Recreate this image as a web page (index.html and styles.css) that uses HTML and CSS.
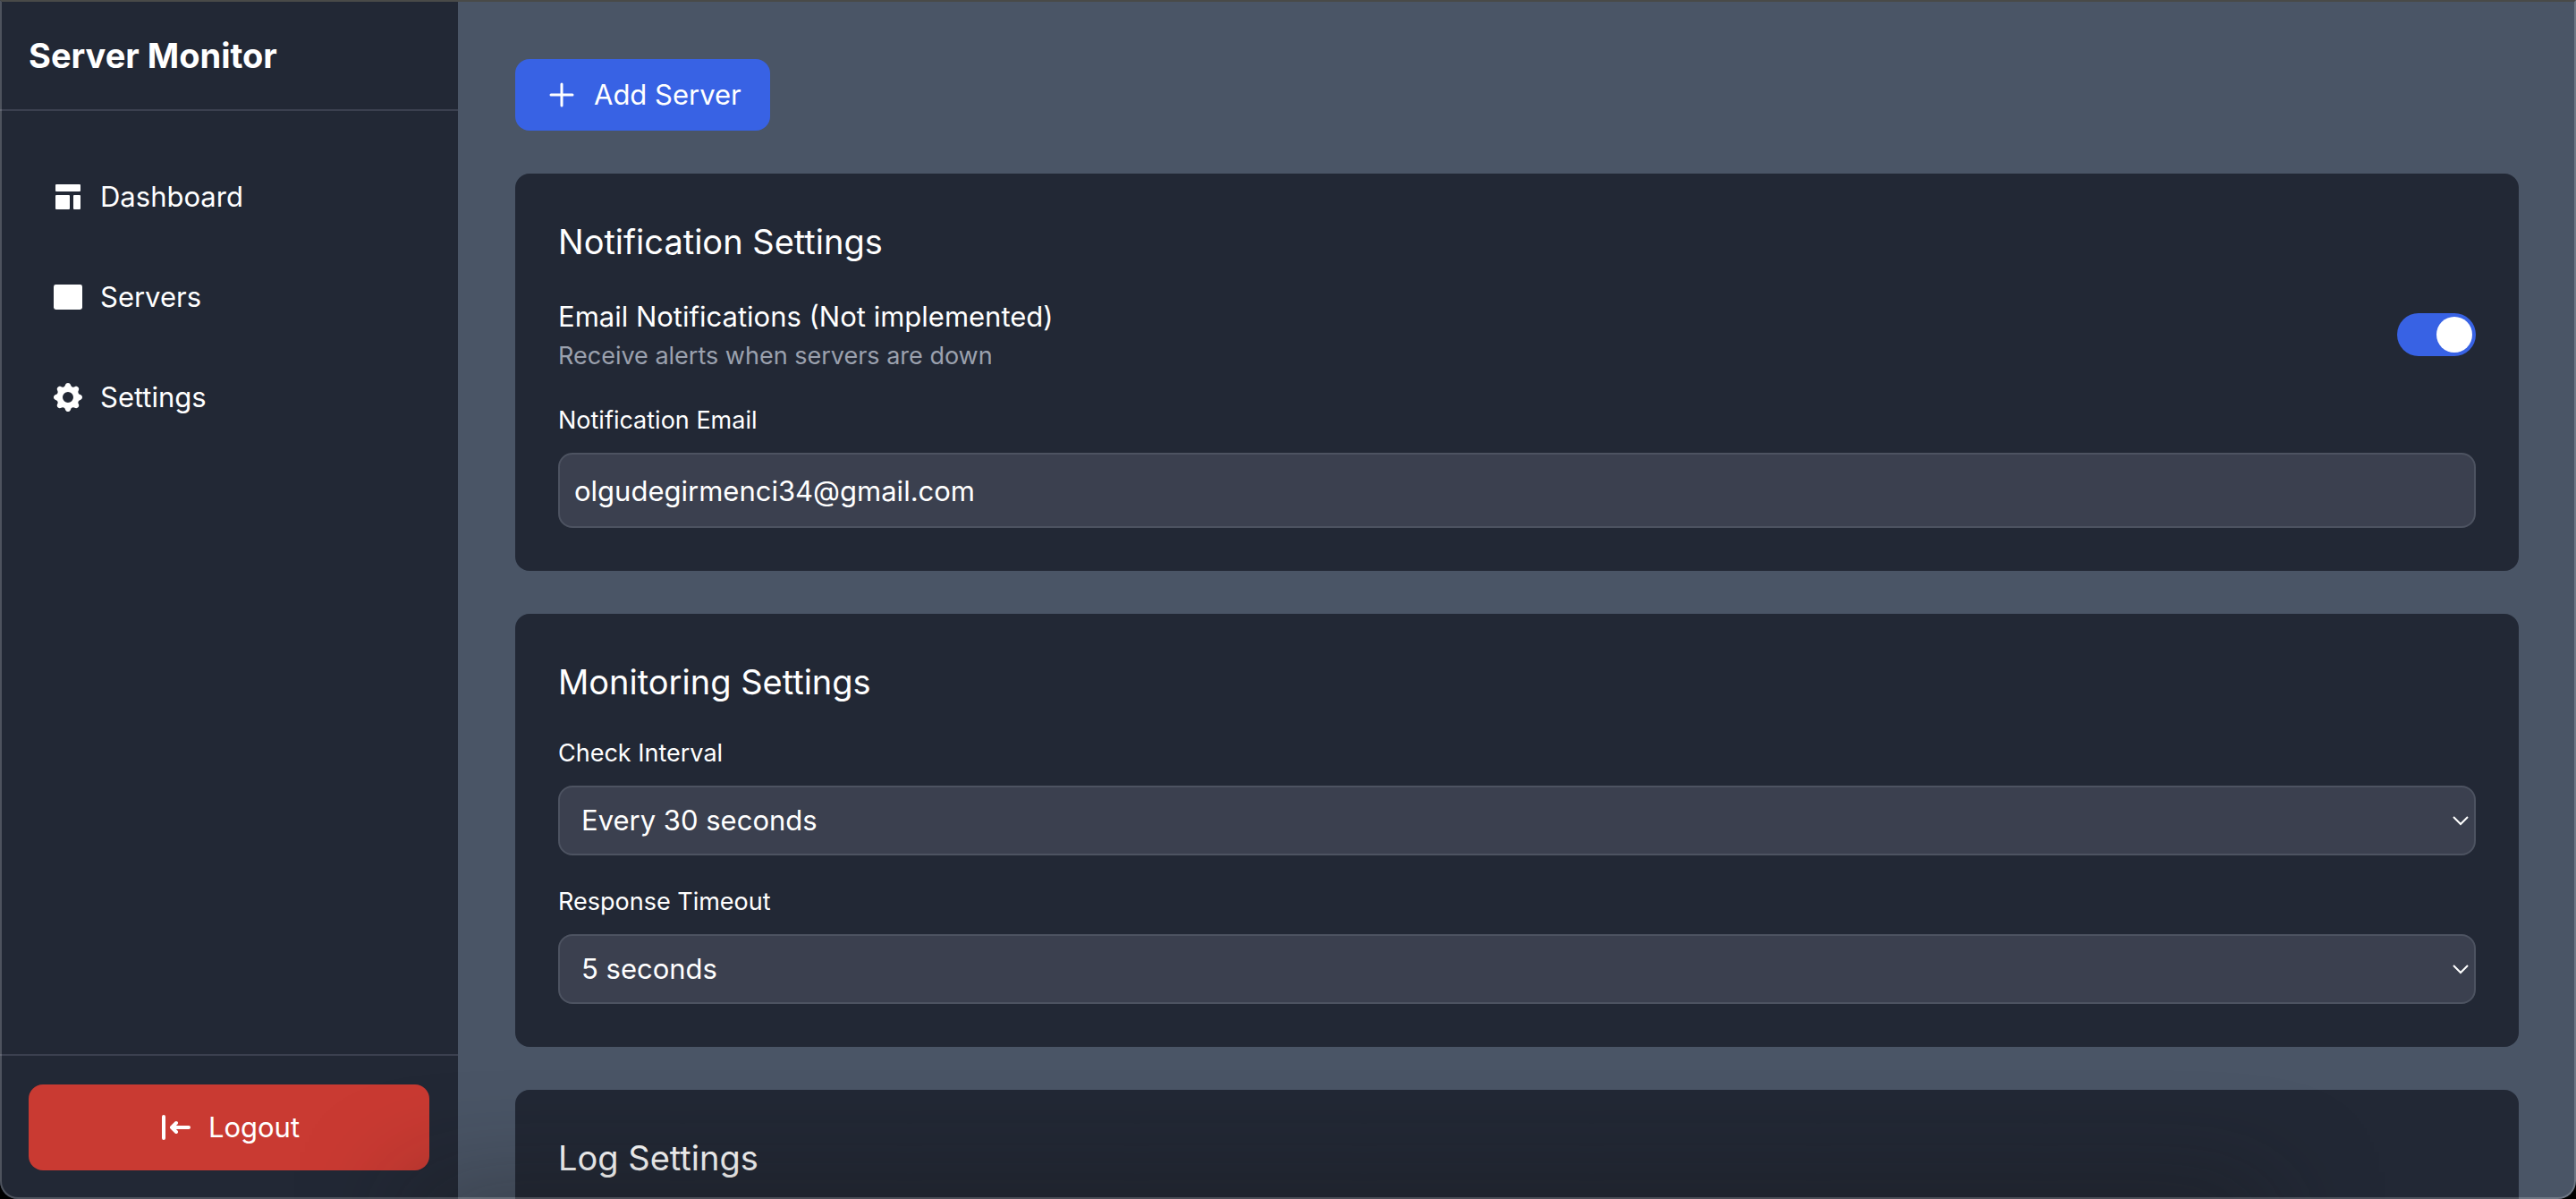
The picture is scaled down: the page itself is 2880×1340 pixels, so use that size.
FILE: index.html
```html
<!DOCTYPE html>
<html lang="en">
<head>
<meta charset="utf-8">
<meta name="viewport" content="width=device-width, initial-scale=1">
<title>Server Monitor</title>
<link rel="stylesheet" href="styles.css">
</head>
<body>
<div class="app">
  <aside class="sidebar">
    <header class="brand"><h1 class="brand-name">Server Monitor</h1></header>
    <nav class="nav">
      <a class="nav-link" href="#dashboard">
        <svg class="icon" viewBox="0 0 20 20" fill="currentColor" aria-hidden="true"><path d="M3.500 3h13a.5.5 0 01.5.5v3a.5.5 0 01-.5.5h-13a.5.5 0 01-.5-.5v-3a.5.5 0 01.5-.5zM3.500 9h7a.5.5 0 01.5.5v7a.5.5 0 01-.5.5h-7a.5.5 0 01-.5-.5v-7a.5.5 0 01.5-.5zM13.500 9h3a.5.5 0 01.5.5v7a.5.5 0 01-.5.5h-3a.5.5 0 01-.5-.5v-7a.5.5 0 01.5-.5z"/></svg>
        <span>Dashboard</span>
      </a>
      <a class="nav-link" href="#servers">
        <svg class="icon" viewBox="0 0 20 20" fill="currentColor" aria-hidden="true"><rect x="2" y="3" width="16" height="14" rx="1.2"/></svg>
        <span>Servers</span>
      </a>
      <a class="nav-link" href="#settings">
        <svg class="icon" viewBox="0 0 20 20" fill="currentColor" aria-hidden="true"><path fill-rule="evenodd" clip-rule="evenodd" d="M11.49 3.17c-.38-1.56-2.6-1.56-2.98 0a1.532 1.532 0 01-2.286.948c-1.372-.836-2.942.734-2.106 2.106.54.886.061 2.042-.947 2.287-1.561.379-1.561 2.6 0 2.978a1.532 1.532 0 01.947 2.287c-.836 1.372.734 2.942 2.106 2.106a1.532 1.532 0 012.287.947c.379 1.561 2.6 1.561 2.978 0a1.533 1.533 0 012.287-.947c1.372.836 2.942-.734 2.106-2.106a1.533 1.533 0 01.947-2.287c1.561-.379 1.561-2.6 0-2.978a1.532 1.532 0 01-.947-2.287c.836-1.372-.734-2.942-2.106-2.106a1.532 1.532 0 01-2.287-.947zM10 13a3 3 0 100-6 3 3 0 000 6z"/></svg>
        <span>Settings</span>
      </a>
    </nav>
    <footer class="sidebar-footer">
      <button class="button button-logout" type="button">
        <svg class="icon" viewBox="0 0 20 20" fill="none" stroke="currentColor" stroke-width="2" stroke-linecap="round" stroke-linejoin="round" aria-hidden="true"><path d="M3 4v12M17 10H8M10 7.500L7.500 10L10 12.500"/></svg>
        <span>Logout</span>
      </button>
    </footer>
  </aside>
  <main class="main">
    <button class="button button-add" type="button">
      <svg class="icon" viewBox="0 0 20 20" fill="none" stroke="currentColor" stroke-width="1.500" stroke-linecap="round" aria-hidden="true"><path d="M10 4v12M4 10h12"/></svg>
      <span>Add Server</span>
    </button>
    <section class="card">
      <h2 class="card-title">Notification Settings</h2>
      <div class="setting-row">
        <div>
          <label class="setting-name" for="email-on">Email Notifications (Not implemented)</label>
          <p class="setting-hint">Receive alerts when servers are down</p>
        </div>
        <input class="toggle" id="email-on" type="checkbox" role="switch" checked>
      </div>
      <div class="field">
        <label class="field-label" for="email">Notification Email</label>
        <input class="control text-input" id="email" type="email" value="olgudegirmenci34@gmail.com">
      </div>
    </section>
    <section class="card">
      <h2 class="card-title">Monitoring Settings</h2>
      <div class="field">
        <label class="field-label" for="interval">Check Interval</label>
        <div class="select-box">
          <select class="control select" id="interval"><option>Every 30 seconds</option><option>Every minute</option></select>
          <svg class="chevron" viewBox="0 0 20 12" fill="none" stroke="currentColor" stroke-width="2" aria-hidden="true"><path d="M2 2l8 8l8-8"/></svg>
        </div>
      </div>
      <div class="field">
        <label class="field-label" for="timeout">Response Timeout</label>
        <div class="select-box">
          <select class="control select" id="timeout"><option>5 seconds</option><option>10 seconds</option></select>
          <svg class="chevron" viewBox="0 0 20 12" fill="none" stroke="currentColor" stroke-width="2" aria-hidden="true"><path d="M2 2l8 8l8-8"/></svg>
        </div>
      </div>
    </section>
    <section class="card">
      <h2 class="card-title">Log Settings</h2>
    </section>
  </main>
</div>
</body>
</html>
```

FILE: styles.css
```css
*, *::before, *::after { box-sizing: border-box; }

body {
  margin: 0;
  background: #000;
  color: #fff;
  font: 31px/48px Inter, "Liberation Sans", sans-serif;
}

h1, h2, p { margin: 0; }

.app {
  position: relative;
  display: flex;
  height: 100vh;
  overflow: hidden;
  border-radius: 0 0 20px 20px;
  background: #4a5566;
}

/* soft shade along the bottom of the window */
.app::before {
  content: "";
  position: absolute;
  right: 12%;
  bottom: -60px;
  left: 16%;
  height: 60px;
  box-shadow: 0 0 120px rgba(24, 24, 24, 0.6);
  pointer-events: none;
}

/* thin outline of the window, over the content */
.app::after {
  content: "";
  position: absolute;
  inset: 0;
  border: 2px solid rgba(255, 255, 255, 0.2);
  border-top-color: #494a48;
  border-radius: inherit;
  pointer-events: none;
}

.sidebar {
  display: flex;
  flex-direction: column;
  flex: 0 0 512px;
  background: #222835;
}

.brand {
  padding: 34px 32px 32px;
  border-bottom: 2px solid #3b404f;
}

.brand-name {
  font-size: 38px;
  line-height: 56px;
  font-weight: 700;
}

.nav {
  display: flex;
  flex: 1;
  flex-direction: column;
  gap: 16px;
  padding: 48px 32px;
}

.nav-link {
  display: flex;
  align-items: center;
  gap: 16px;
  padding: 24px;
  color: inherit;
  text-decoration: none;
}

.icon {
  flex: none;
  width: 40px;
  height: 40px;
}

.sidebar-footer {
  padding: 32px;
  border-top: 2px solid #3b404f;
}

.button {
  display: flex;
  align-items: center;
  justify-content: center;
  gap: 16px;
  border: 0;
  border-radius: 16px;
  color: inherit;
  font: inherit;
}

.button-logout {
  width: 100%;
  padding: 24px 32px;
  background: #c93a32;
}

.button-add {
  align-self: flex-start;
  padding: 16px 32px;
  background: #3862e4;
}

.main {
  display: flex;
  flex: 1;
  flex-direction: column;
  gap: 48px;
  min-width: 0;
  padding: 66px 64px 0;
  overflow: hidden;
}

.card {
  display: flex;
  flex: none;
  flex-direction: column;
  gap: 32px;
  padding: 48px;
  border-radius: 16px;
  background: #222835;
}

.card-title {
  font-size: 38px;
  line-height: 56px;
  font-weight: 400;
}

.setting-row {
  display: flex;
  align-items: center;
  justify-content: space-between;
}

.setting-name {
  display: block;
}

.setting-hint {
  color: #9ba1ae;
  font-size: 27px;
  line-height: 40px;
}

.toggle {
  appearance: none;
  display: flex;
  justify-content: flex-end;
  width: 88px;
  height: 48px;
  margin: 0;
  padding: 4px;
  border-radius: 24px;
  background: #3862e4;
}

.toggle::before {
  content: "";
  width: 40px;
  height: 40px;
  border-radius: 50%;
  background: #fff;
}

.toggle:not(:checked) {
  justify-content: flex-start;
  background: #4d5361;
}

.field {
  display: flex;
  flex-direction: column;
  gap: 16px;
}

.field-label {
  font-size: 27px;
  line-height: 40px;
}

.control {
  width: 100%;
  margin: 0;
  border: 2px solid #4d5361;
  border-radius: 16px;
  background: #3b404f;
  color: inherit;
  font: inherit;
}

.text-input {
  height: 84px;
  padding: 0 16px;
}

.select-box {
  display: grid;
  align-items: center;
}

.select {
  grid-area: 1 / 1;
  appearance: none;
  height: 78px;
  padding: 0 48px 0 24px;
}

.chevron {
  grid-area: 1 / 1;
  justify-self: end;
  width: 20px;
  height: 12px;
  margin-right: 7px;
  pointer-events: none;
}
```
